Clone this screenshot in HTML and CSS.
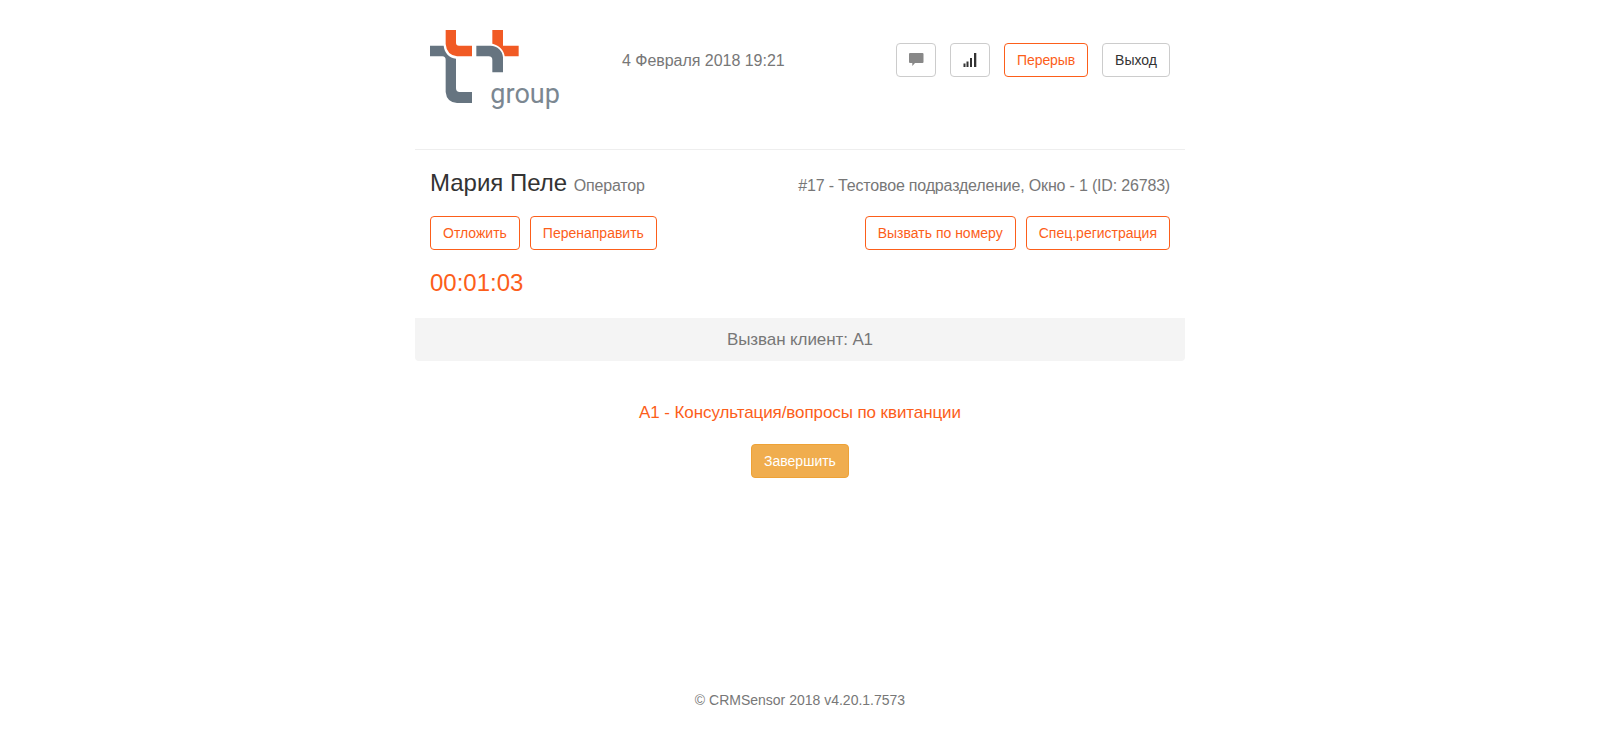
FILE: index.html
```html
<!DOCTYPE html>
<html lang="ru">
<head>
<meta charset="utf-8">
<title>CRMSensor</title>
<link rel="stylesheet" href="styles.css">
</head>
<body>
<div class="container">
  <header class="header">
    <svg class="logo" viewBox="45 30 390 240" role="img" aria-label="t+ group">
      <path class="logo-orange" d="M92 30H123V68Q123 77 132 77H171V109H126Q95 105 92 72Z"/>
      <path class="logo-gray" d="M45 77H86C88 98 103 114 123 116V205Q123 216 134 216H171V249H126Q95 247 92 216V120Q92 109 82 109H45Z"/>
      <path class="logo-orange" d="M232 30H264V77H311V109H269C267 90 252 76 232 71Z"/>
      <path class="logo-gray" d="M184 77H226C248 78 263 92 264 112V157H232V120Q232 109 221 109H184Z"/>
      <text class="logo-text" x="226" y="250" textLength="209" lengthAdjust="spacingAndGlyphs">group</text>
    </svg>
    <div class="date">4 Февраля 2018 19:21</div>
    <nav class="tools">
      <button class="btn icon-btn" aria-label="Сообщения"><svg class="icon" viewBox="0 0 14 14"><path fill="#888" d="M1 0H13.500Q14.500 0 14.500 1V9Q14.500 10 13.500 10H6L3.300 13V10H1Q0 10 0 9V1Q0 0 1 0Z"/></svg></button>
      <button class="btn icon-btn" aria-label="Статистика"><svg class="icon" viewBox="0 0 14 14"><path fill="#333" d="M0.500 10.500h2v3.500h-2zM3.500 8.500h2v5.500h-2zM7 5h2v9H7zM11 0h2.300v14H11z"/></svg></button>
      <button class="btn btn-orange btn-break">Перерыв</button>
      <button class="btn">Выход</button>
    </nav>
  </header>
  <section class="operator">
    <h1 class="name">Мария Пеле <small>Оператор</small></h1>
    <div class="office">#17 - Тестовое подразделение, Окно - 1 (ID: 26783)</div>
  </section>
  <div class="actions">
    <button class="btn btn-orange">Отложить</button>
    <button class="btn btn-orange">Перенаправить</button>
    <button class="btn btn-orange push">Вызвать по номеру</button>
    <button class="btn btn-orange">Спец.регистрация</button>
  </div>
  <div class="timer">00:01:03</div>
  <div class="status">Вызван клиент: А1</div>
  <main class="service">
    <div class="service-name">А1 - Консультация/вопросы по квитанции</div>
    <button class="btn btn-finish">Завершить</button>
  </main>
  <footer class="footer">© CRMSensor 2018 v4.20.1.7573</footer>
</div>
</body>
</html>
```
FILE: styles.css
```css
* { box-sizing: border-box; }
body {
  margin: 0;
  background: #fff;
  color: #777;
  font: 14px/20px "Liberation Sans", Arial, sans-serif;
}
.container { width: 770px; height: 730px; margin: 0 auto; display: flex; flex-direction: column; }
.header {
  display: flex;
  align-items: flex-start;
  height: 150px;
  padding: 30px 15px 0;
  border-bottom: 1px solid #eee;
}
.logo { width: 130px; height: 80px; overflow: visible; }
.logo-orange { fill: #f15a24; }
.logo-gray { fill: #667480; }
.logo-text { fill: #7b8791; font: 400 83px Roboto, sans-serif; }
.date { margin: 21px 0 0 62px; font-size: 16px; letter-spacing: -0.03px; white-space: nowrap; }
.tools { display: flex; gap: 14px; margin: 13px 0 0 auto; }
.btn {
  height: 34px;
  padding: 6px 12px;
  border: 1px solid #ccc;
  border-radius: 4px;
  background: #fff;
  color: #333;
  font: inherit;
  white-space: nowrap;
}
.icon-btn { width: 40px; }
.icon { display: block; width: 14px; height: 14px; margin: 3px 0; overflow: visible; }
.btn-orange { border-color: #fc5e1a; color: #fc5e1a; }
.btn-break { width: 84px; padding: 6px 0; letter-spacing: -0.1px; }
.operator {
  display: flex;
  justify-content: space-between;
  align-items: baseline;
  height: 66px;
  padding: 20px 15px 0;
}
.name { margin: 0; color: #333; font-size: 24px; line-height: 26px; font-weight: 400; }
.name small { font-size: 16px; letter-spacing: -0.2px; color: #777; }
.office { font-size: 16px; letter-spacing: -0.18px; }
.actions { display: flex; gap: 10px; padding: 0 15px; }
.push { margin-left: auto; }
.timer { margin-top: 20px; padding: 0 15px; color: #fc5e1a; font-size: 24px; line-height: 26px; }
.status {
  height: 43px;
  margin-top: 22px;
  border-radius: 0 0 4px 4px;
  background: #f4f4f4;
  font-size: 17px;
  letter-spacing: -0.1px;
  line-height: 43px;
  text-align: center;
}
.service { display: flex; flex-direction: column; align-items: center; padding-top: 42px; }
.service-name { margin-bottom: 21px; color: #fc5e1a; font-size: 17px; letter-spacing: -0.09px; }
.btn-finish { border-color: #eea236; background: #f0ad4e; color: #fff; }
.footer { margin: auto 0 20px; text-align: center; }
```
